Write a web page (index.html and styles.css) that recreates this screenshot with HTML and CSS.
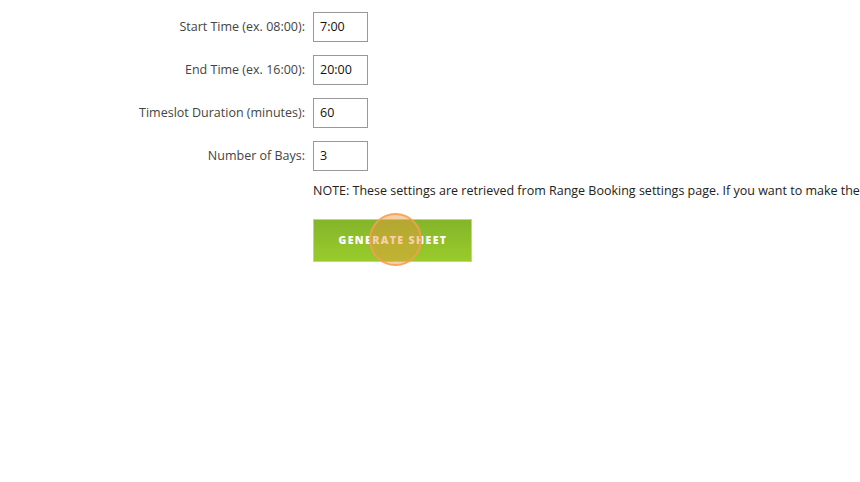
FILE: index.html
```html
<!DOCTYPE html>
<html>
<head>
<meta charset="utf-8">
<link rel="stylesheet" href="styles.css">
</head>
<body>
<div class="form">
  <label class="lbl">Start Time (ex. 08:00):</label>
  <div class="field"><input class="inp" type="text" value="7:00"></div>
  <label class="lbl">End Time (ex. 16:00):</label>
  <div class="field"><input class="inp" type="text" value="20:00"></div>
  <label class="lbl">Timeslot Duration (minutes):</label>
  <div class="field"><input class="inp" type="text" value="60"></div>
  <label class="lbl">Number of Bays:</label>
  <div class="field"><input class="inp" type="text" value="3"></div>
  <div></div>
  <div class="note">NOTE: These settings are retrieved from Range Booking settings page. If you want to make these changes permanent, please update them there.</div>
  <div></div>
  <div class="actions">
    <button class="btn">GENERATE SHEET</button>
    <span class="click"></span>
  </div>
</div>
</body>
</html>
```
FILE: styles.css
```css
html, body {
  margin: 0;
  padding: 0;
  background: #fff;
  overflow: hidden;
}
body {
  font-family: "Open Sans", "Liberation Sans", sans-serif;
  width: 860px;
  height: 482px;
}
.form {
  display: grid;
  grid-template-columns: 305px 1fr;
  column-gap: 8px;
  row-gap: 13px;
  padding-top: 12px;
  align-items: center;
}
.lbl {
  text-align: right;
  font-size: 12.5px;
  color: #444;
  padding-bottom: 2px;
}
.field {
  display: flex;
}
.inp {
  box-sizing: border-box;
  width: 55px;
  height: 30px;
  border: 1px solid #999;
  border-radius: 0;
  padding: 0 6px 2px;
  font-family: "Open Sans", "Liberation Sans", sans-serif;
  font-size: 12.5px;
  color: #111;
  outline: none;
}
.note {
  font-size: 12.5px;
  color: #222;
  white-space: nowrap;
  overflow: hidden;
  margin-top: -2px;
}
.actions {
  position: relative;
  margin-top: 7px;
  height: 43px;
}
.btn {
  box-sizing: border-box;
  width: 159px;
  height: 43px;
  border: 1px solid #b7d98a;
  background: linear-gradient(#84b52a, #9acb2b);
  color: #fff;
  font-family: "Open Sans", "Liberation Sans", sans-serif;
  font-weight: 800;
  font-size: 10.5px;
  letter-spacing: 1.4px;
  padding: 0 0 2px 1px;
  cursor: pointer;
}
.click {
  position: absolute;
  left: 56px;
  top: -6px;
  width: 53px;
  height: 53px;
  border-radius: 50%;
  border: 2px solid rgba(245, 160, 80, 0.85);
  background: rgba(240, 150, 60, 0.45);
  box-sizing: border-box;
}
```
